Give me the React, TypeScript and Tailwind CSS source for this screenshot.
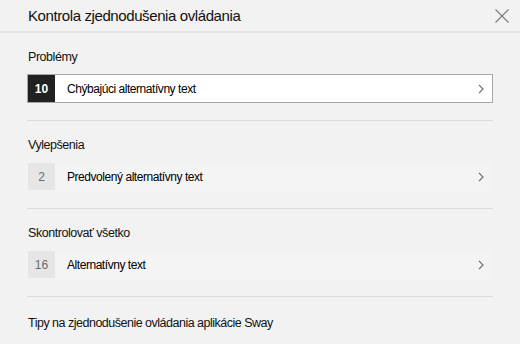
type Item = { count: number; label: string; active?: boolean };

function Chevron() {
  return (
    <svg width="6" height="10" viewBox="0 0 6 10" className="mr-[8px] text-[#6e6e6e]">
      <path d="M1 0.8 L5 5 L1 9.2" fill="none" stroke="currentColor" strokeWidth="1.2" />
    </svg>
  );
}

function Row({ count, label, active }: Item) {
  return (
    <div
      className={`flex h-[29px] items-center border ${
        active ? "border-[#a6a6a6] bg-white" : "border-transparent bg-[#f4f4f4]"
      }`}
    >
      <div
        className={`flex h-[27px] w-[27px] items-center justify-center text-[12px] ${
          active ? "bg-[#212121] font-bold text-white" : "bg-[#e6e6e6] text-[#6b6b6b]"
        }`}
      >
        {count}
      </div>
      <span className="ml-[12px] flex-1 text-[12px] tracking-[-0.45px] text-[#000]">{label}</span>
      <Chevron />
    </div>
  );
}

function Section({ title, item }: { title: string; item: Item }) {
  return (
    <div className="border-b border-[#dadada] pb-[17px] pt-[16px]">
      <div className="mb-[9px] h-[16px] pl-px text-[12.5px] leading-[16px] tracking-[-0.45px] text-[#111]">
        {title}
      </div>
      <Row {...item} />
    </div>
  );
}

export default function App() {
  return (
    <div
      className="h-[344px] w-[520px] bg-[#f2f2f2] text-black"
      style={{ fontFamily: '"Liberation Sans", Arial, sans-serif' }}
    >
      <div className="flex h-[33px] items-center justify-between border-b-2 border-[#e3e3e3] pl-[28px] pr-[11px]">
        <h1 className="pt-[2px] text-[15px] tracking-[-0.4px] text-[#111]">Kontrola zjednodušenia ovládania</h1>
        <svg width="14" height="14" viewBox="0 0 14 14" className="text-[#7a7a7a]">
          <path d="M0.5 0.5 L13.5 13.5 M13.5 0.5 L0.5 13.5" stroke="currentColor" strokeWidth="1.1" />
        </svg>
      </div>
      <div className="px-[27px]">
        <Section title="Problémy" item={{ count: 10, label: "Chýbajúci alternatívny text", active: true }} />
        <Section title="Vylepšenia" item={{ count: 2, label: "Predvolený alternatívny text" }} />
        <Section title="Skontrolovať všetko" item={{ count: 16, label: "Alternatívny text" }} />
        <div className="pl-px pt-[18px] text-[12.5px] leading-[16px] tracking-[-0.5px] text-[#111]">
          Tipy na zjednodušenie ovládania aplikácie Sway
        </div>
      </div>
    </div>
  );
}
